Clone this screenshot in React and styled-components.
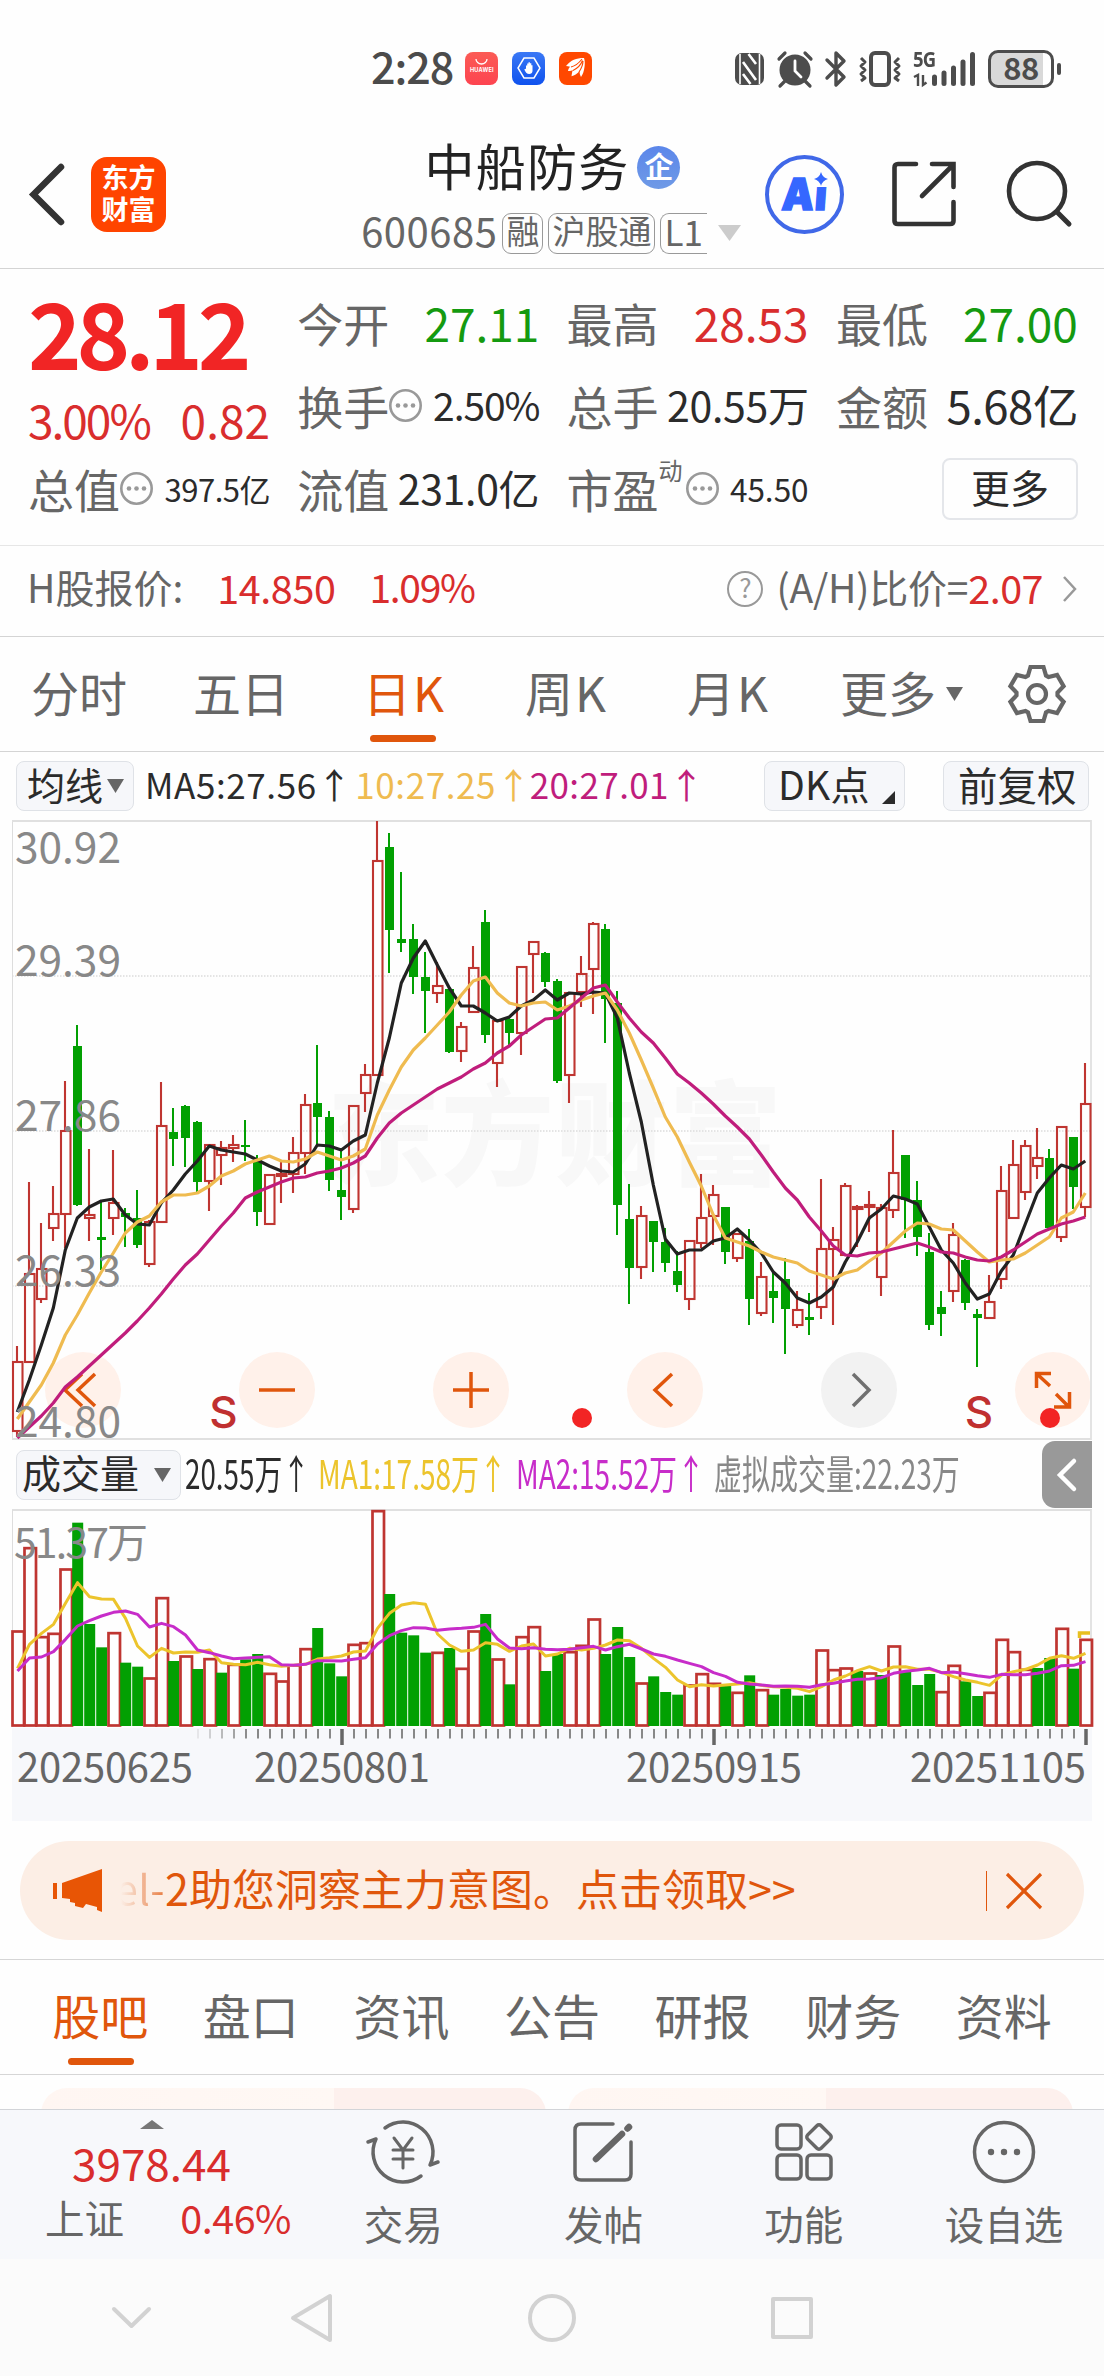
import React from "react";
import styled, { createGlobalStyle, css } from "styled-components";

const Global = createGlobalStyle`
  * { box-sizing: border-box; }
  body { margin: 0; background: #fff; }
  #root { width: 1104px; }
  svg { display: block; flex: none; overflow: visible; }
`;

const RED = "#bf3531";
const UP = "#d92d2d";
const GREEN = "#02a002";
const DOWN = "#149a10";
const ORANGE = "#e0560c";
const GREY = "#666";
const INK = "#2b2b2b";
const FONT = '"Noto Sans CJK SC", "Noto Sans", sans-serif';

const Page = styled.main`
  width: 1104px;
  height: 2376px;
  display: flex;
  flex-direction: column;
  background: #fefefe;
  font-family: ${FONT};
  overflow: hidden;
`;

const T = styled.span`
  flex: none;
  display: inline-block;
  white-space: nowrap;
  line-height: 1;
  padding-bottom: 0.13em;
  font-size: ${(p) => p.$s}px;
  font-weight: ${(p) => p.$w || 400};
  letter-spacing: ${(p) => p.$ls || 0}px;
  color: ${(p) => p.$c || GREY};
  margin-left: ${(p) => p.$ml || 0}px;
`;

/* ---------- status bar ---------- */
const StatusBar = styled.header`
  height: 120px;
  padding: 17px 43px 0 371px;
  display: flex;
  align-items: center;
  justify-content: space-between;
`;
const Cluster = styled.div`
  display: flex;
  align-items: center;
  gap: ${(p) => p.$gap}px;
`;
const AppBadge = styled.div`
  width: 33px;
  height: 33px;
  border-radius: 8px;
  background: ${(p) => p.$bg};
  display: flex;
  align-items: center;
  justify-content: center;
  position: relative;
`;
const Tiny = styled.span`
  font: 700 5.6px/1 Inter, sans-serif;
  letter-spacing: 0.2px;
  color: #fff;
  padding-top: 5px;
`;
const Smile = styled.svg`
  position: absolute;
  top: 6px;
  left: 10px;
`;
const Net = styled.div`
  width: 63px;
  height: 35px;
  display: flex;
  align-items: flex-end;
  position: relative;
`;
const NetLabel = styled.span`
  position: absolute;
  left: 0;
  top: -2px;
  font: 700 21px/1 "Open Sans", sans-serif;
  letter-spacing: -1px;
  transform: scaleX(0.88);
  transform-origin: left;
  color: #4c4c4c;
`;
const Battery = styled.div`
  width: 66px;
  height: 38px;
  border: 3px solid #4c4c4c;
  border-radius: 10px;
  display: flex;
  align-items: center;
  justify-content: center;
  background: linear-gradient(90deg, #d9d9d9 87%, #fff 87%);
`;
const Nub = styled.div`
  width: 4px;
  height: 12px;
  border-radius: 2px;
  margin-left: 3px;
  background: #4c4c4c;
`;
const Row = styled.div`
  display: flex;
  align-items: center;
  margin-left: ${(p) => p.$ml || 0}px;
`;

function Status() {
  return (
    <StatusBar>
      <Cluster $gap={14}>
        <T $s={43} $w={500} $c="#4b4b4b" $ls={-1}>2:28</T>
        <Row $ml={-2}>
          <Cluster $gap={14}>
            <AppBadge $bg="linear-gradient(#fb5b55,#fd4450)">
              <Smile width="13" height="7"><path d="M1 1a5.5 5 0 0 0 11 0" fill="none" stroke="#fff" strokeWidth="1.3" /></Smile>
              <Tiny>HUAWEI</Tiny>
            </AppBadge>
            <AppBadge $bg="linear-gradient(#3a78f5,#0f52ee)">
              <svg width="24" height="24" viewBox="0 0 24 24">
                <path d="M7 2h10l6 10-6 10H7L1 12z" fill="none" stroke="#fff" strokeWidth="1.5" />
                <path d="M9 13V9.5h1.2V7.4h1.3V6.3h1.4v1h1.4v2h1.2V15c0 2-1.5 3-3.3 3-2.2 0-3.5-1.500-4.900-4.500l1-.7z" fill="#fff" />
              </svg>
            </AppBadge>
            <AppBadge $bg="#ff4800">
              <svg width="24" height="24" viewBox="0 0 24 24">
                <path d="M2 10C7 4 12 2 20 2c1 3 1 6 .5 9-.5 4-1.500 7-3.500 10-1-2-1.500-3.500-1.300-6-3 3-5 4.500-8.200 5.300C8 17 8 16 9 14c-2 1-3.500 1.200-5 1 0-1.500 1-3 2-4.300-1.500-.4-2.600-.5-4-.7z" fill="#fff" />
                <path d="M7 11c4-1 8-4 11-8M9 14.500c4-2 8-6 9.500-10M15 16c2-3 4-7 4-11" stroke="#ff4800" strokeWidth="1.100" fill="none" />
              </svg>
            </AppBadge>
          </Cluster>
        </Row>
      </Cluster>
      <Cluster $gap={12}>
        <svg width="31" height="34" viewBox="0 0 31 34">
          <rect x="1" y="1" width="29" height="32" rx="7" fill="#4c4c4c" />
          <path d="M6 2v30M25.500 2v30" stroke="#fff" strokeWidth="1.600" />
          <path d="M9 10l13 18M9 22l7.500 10M14.500 2L22 12" stroke="#fff" strokeWidth="2.600" />
        </svg>
        <svg width="36" height="36" viewBox="0 0 36 36">
          <circle cx="18" cy="19" r="15.500" fill="#4c4c4c" />
          <path d="M2 8l6-6M34 8l-6-6M8 30l-5 5M28 30l5 5" stroke="#4c4c4c" strokeWidth="3.200" strokeLinecap="round" />
          <path d="M18 10v10l6 6" stroke="#fff" strokeWidth="2.800" fill="none" strokeLinecap="round" />
        </svg>
        <svg width="22" height="36" viewBox="0 0 22 36">
          <path d="M2 9l17 17-8 8V2l8 8L2 27" stroke="#4c4c4c" strokeWidth="3.400" fill="none" strokeLinejoin="round" strokeLinecap="round" />
        </svg>
        <svg width="42" height="36" viewBox="0 0 42 36">
          <rect x="12" y="2" width="18" height="32" rx="4" fill="none" stroke="#4c4c4c" strokeWidth="4" />
          <path d="M2 7l4 4-4 4 4 4-4 4 4 4-4 3M40 7l-4 4 4 4-4 4 4 4-4 4 4 3" stroke="#4c4c4c" strokeWidth="3" fill="none" strokeLinejoin="round" />
        </svg>
        <Net>
          <NetLabel>5G</NetLabel>
          <svg width="63" height="35" viewBox="0 0 63 35">
            <path d="M1 26l4-2v11M10 24v10l3.500-2.500" stroke="#4c4c4c" strokeWidth="2.400" fill="none" />
            {[[21.500, 25], [31, 21], [40.500, 16], [50, 10], [59.500, 2.500]].map(([x, y]) => (
              <path key={x} d={`M${x} ${y + 1}V32.500`} stroke="#4c4c4c" strokeWidth="5" strokeLinecap="round" />
            ))}
          </svg>
        </Net>
        <Row>
          <Battery><T $s={31} $w={700} $c="#4c4c4c" $ls={-0.5}>88</T></Battery>
          <Nub />
        </Row>
      </Cluster>
    </StatusBar>
  );
}

/* ---------- title bar ---------- */
const TitleBar = styled.div`
  height: 149px;
  border-bottom: 1px solid #d4d4d4;
  padding: 0 32px 0 28px;
  display: flex;
  align-items: center;
`;
const Logo = styled.div`
  width: 75px;
  height: 75px;
  margin-left: 25px;
  border-radius: 16px;
  background: #ff4400;
  display: flex;
  flex-direction: column;
  align-items: center;
  justify-content: center;
  gap: 2px;
`;
const TitleBlock = styled.div`
  width: 384px;
  margin-left: 193px;
  height: 132px;
  flex: none;
  display: flex;
  flex-direction: column;
  align-items: center;
`;
const NameRow = styled.div`
  display: flex;
  align-items: center;
  gap: 8px;
  height: 78px;
  padding-left: 3px;
`;
const CodeRow = styled.div`
  display: flex;
  align-items: center;
  height: 54px;
  gap: 5px;
`;
const Verified = styled.span`
  width: 43px;
  height: 43px;
  border-radius: 50%;
  background: linear-gradient(#5b86ea, #6f9ae6);
  display: flex;
  justify-content: center;
  align-items: center;
`;
const Tag = styled.span`
  height: 41px;
  padding: 0 3px;
  display: flex;
  align-items: center;
  border: 1.5px solid #999;
  border-radius: ${(p) => (p.$cut ? "9px 0 0 9px" : "9px")};
  ${(p) => p.$cut && css`border-right: 0; padding-right: 4px;`}
`;
const AiButton = styled.div`
  position: relative;
  width: 79px;
  height: 79px;
  margin-left: 22px;
  border: 4px solid #4068e8;
  border-radius: 50%;
  display: flex;
  align-items: center;
  justify-content: center;
`;
const AiText = styled.span`
  font: 900 44px/1 Inter, Lato, sans-serif;
  letter-spacing: 1px;
  color: #3567ff;
  transform: skewX(-4deg) scaleX(0.92);
  -webkit-text-stroke: 1.500px #3567ff;
`;
const Spark = styled.svg`
  position: absolute;
  top: 12px;
  right: 11px;
`;

function Title() {
  return (
    <TitleBar>
      <svg width="38" height="64" viewBox="0 0 38 64">
        <path d="M33 5L5.500 32.500L33 60" fill="none" stroke="#333" strokeWidth="6.500" strokeLinecap="round" />
      </svg>
      <Logo>
        <T $s={27} $w={700} $c="#fff">东方</T>
        <T $s={27} $w={700} $c="#fff">财富</T>
      </Logo>
      <TitleBlock>
        <NameRow>
          <T $s={50} $c="#222" $ls={1.2}>中船防务</T>
          <Verified><T $s={29} $w={700} $c="#fff">企</T></Verified>
        </NameRow>
        <CodeRow>
          <T $s={40} $ls={0.5}>600685</T>
          <Tag><T $s={33}>融</T></Tag>
          <Tag><T $s={33}>沪股通</T></Tag>
          <Tag $cut><T $s={35}>L1</T></Tag>
          <svg width="29" height="16" viewBox="0 0 29 16"><path d="M6 0h23L17.500 16z" fill="#ccc" /></svg>
        </CodeRow>
      </TitleBlock>
      <AiButton>
        <AiText>Ai</AiText>
        <Spark width="16" height="16" viewBox="0 0 16 16">
          <rect width="16" height="16" fill="#fefefe" />
          <path d="M8 1Q9.500 6.500 15 8Q9.500 9.500 8 15Q6.500 9.500 1 8Q6.500 6.500 8 1z" fill="#3567ff" />
        </Spark>
      </AiButton>
      <Row $ml={48}>
        <svg width="64" height="66" viewBox="0 0 64 66">
          <path d="M24 3H6Q2.500 3 2.500 6.500V60Q2.500 63 6 63H58Q61.500 63 61.500 60V41M40 3H61.500V26M61 4L30 35" fill="none" stroke="#333" strokeWidth="4.600" strokeLinecap="round" />
        </svg>
      </Row>
      <Row $ml={50}>
        <svg width="66" height="66" viewBox="0 0 66 66">
          <circle cx="31" cy="30" r="28" fill="none" stroke="#333" strokeWidth="4.600" />
          <path d="M51 51L63 63" stroke="#333" strokeWidth="5" strokeLinecap="round" />
        </svg>
      </Row>
    </TitleBar>
  );
}

/* ---------- quote ---------- */
const Quote = styled.section`
  height: 277px;
  padding: 14px 26px 0 28px;
  border-bottom: 1px solid #e6e6e6;
  display: grid;
  grid-template-columns: repeat(4, 242px);
  grid-template-rows: repeat(3, 83px);
  column-gap: 27.300px;
`;
const Cell = styled.div`
  display: flex;
  align-items: center;
  justify-content: space-between;
`;
const PriceCell = styled.div`
  grid-row: span 2;
  display: flex;
  flex-direction: column;
  padding-top: 2px;
  gap: 8px;
`;
const Sup = styled.span`
  font-size: 24px;
  line-height: 1;
  color: ${GREY};
  align-self: flex-start;
  padding-bottom: 41px;
  margin-right: 3px;
`;
const Mark = styled.span`
  padding-bottom: 5px;
`;
const Outline = styled.button`
  width: 136px;
  height: 62px;
  margin-left: auto;
  margin-bottom: 3px;
  border: 2px solid #e4e6ea;
  border-radius: 8px;
  background: transparent;
  font-family: inherit;
  display: flex;
  align-items: center;
  justify-content: center;
  padding: 0;
`;
const Dots = () => (
  <Mark>
    <svg width="33" height="33" viewBox="0 0 33 33">
      <circle cx="16.500" cy="16.500" r="15.200" fill="none" stroke="#999" strokeWidth="2.600" />
      {[9, 16.500, 24].map((x) => <circle key={x} cx={x} cy="16.500" r="2.300" fill="#999" />)}
    </svg>
  </Mark>
);

function QuotePanel() {
  return (
    <Quote>
      <PriceCell>
        <T $s={91} $w={700} $c="#f12525" $ls={-5.2}>28.12</T>
        <Cell><T $s={46} $c={UP} $ls={-2}>3.00%</T><T $s={46} $c={UP}>0.82</T></Cell>
      </PriceCell>
      <Cell><T $s={46}>今开</T><T $s={46} $c={DOWN}>27.11</T></Cell>
      <Cell><T $s={46}>最高</T><T $s={46} $c={UP}>28.53</T></Cell>
      <Cell><T $s={46}>最低</T><T $s={46} $c={DOWN}>27.00</T></Cell>
      <Cell><Row><T $s={46}>换手</T><Dots /></Row><T $s={39} $c={INK} $ls={-1.100}>2.50%</T></Cell>
      <Cell><T $s={46}>总手</T><T $s={41} $c={INK} $ls={-0.3}>20.55万</T></Cell>
      <Cell><T $s={46}>金额</T><T $s={45.500} $c={INK} $ls={-0.5}>5.68亿</T></Cell>
      <Cell><Row><T $s={46}>总值</T><Dots /></Row><T $s={31} $c={INK} $ls={-0.5}>397.5亿</T></Cell>
      <Cell><T $s={46}>流值</T><T $s={41} $c={INK} $ls={-0.3}>231.0亿</T></Cell>
      <Cell><Row><T $s={46}>市盈</T><Sup>动</Sup><Dots /></Row><T $s={31.500} $c={INK}>45.50</T></Cell>
      <Cell><Outline><T $s={39} $c={INK}>更多</T></Outline></Cell>
    </Quote>
  );
}

/* ---------- H share ---------- */
const HRow = styled.section`
  height: 91px;
  border-bottom: 1px solid #d4d4d4;
  padding: 0 27px 4px 27px;
  display: flex;
  align-items: center;
`;
const Spacer = styled.span`
  flex: 1;
`;
const Help = styled.span`
  width: 36px;
  height: 36px;
  border: 2.500px solid #999;
  border-radius: 50%;
  display: flex;
  align-items: center;
  justify-content: center;
  margin-right: 13px;
`;

/* ---------- tabs ---------- */
const Tabs = styled.nav`
  height: 115px;
  border-bottom: 1px solid #d4d4d4;
  padding: 0 37px 0 31px;
  display: flex;
  align-items: center;
`;
const Tab = styled.div`
  position: relative;
  height: 100%;
  display: flex;
  align-items: center;
  width: ${(p) => p.$w}px;
`;
const Underline = styled.i`
  position: absolute;
  bottom: 9px;
  left: ${(p) => p.$l}px;
  width: 66px;
  height: 7px;
  border-radius: 4px;
  background: ${ORANGE};
`;
const gear = Array.from({ length: 6 }, (_, k) => {
  const a = (k * Math.PI) / 3;
  return [[-9, -18.500], [-6.500, -27], [6.500, -27], [9, -18.500]]
    .map(([x, y]) => `${(x * Math.cos(a) - y * Math.sin(a)).toFixed(1)},${(x * Math.sin(a) + y * Math.cos(a)).toFixed(1)}`)
    .join(" ");
}).join(" ");

const Caret = ({ w, h, c = GREY }) => (
  <svg width={w} height={h} viewBox={`0 0 ${w} ${h}`}><path d={`M0 0H${w}L${w / 2} ${h}z`} fill={c} /></svg>
);

function PeriodTabs() {
  return (
    <Tabs>
      <Tab $w={162}><T $s={48}>分时</T></Tab>
      <Tab $w={170}><T $s={48}>五日</T></Tab>
      <Tab $w={162}><T $s={48} $c={ORANGE} $ls={2}>日K</T><Underline $l={7} /></Tab>
      <Tab $w={162}><T $s={48} $ls={2}>周K</T></Tab>
      <Tab $w={153}><T $s={48} $ls={2}>月K</T></Tab>
      <Tab $w={168}><T $s={48}>更多</T><Row $ml={10}><Caret w={17} h={14} /></Row></Tab>
      <svg width="58" height="58" viewBox="-29 -29 58 58">
        <polygon points={gear} fill="none" stroke={GREY} strokeWidth="4.200" />
        <circle r="9" fill="none" stroke={GREY} strokeWidth="4.200" />
      </svg>
    </Tabs>
  );
}

/* ---------- indicator rows ---------- */
const IndicatorRow = styled.div`
  height: ${(p) => p.$h}px;
  padding: 0 0 0 16px;
  display: flex;
  align-items: center;
`;
const Chip = styled.div`
  width: ${(p) => p.$w}px;
  height: 50px;
  padding: 0 9px 0 ${(p) => p.$pl}px;
  border: 1.500px solid #dfe2e7;
  border-radius: 8px;
  background: #f6f7fa;
  display: flex;
  align-items: center;
  justify-content: space-between;
  flex: none;
  margin-left: ${(p) => p.$ml || 0}px;
`;
const Corner = styled.svg`
  align-self: flex-end;
  margin-bottom: 6px;
`;
const Squeezed = styled.div`
  width: ${(p) => p.$w}px;
  margin-left: ${(p) => p.$ml || 0}px;
  flex: none;
  display: flex;
  & > span {
    transform: scaleX(${(p) => p.$k});
    transform-origin: left center;
  }
`;
const Collapse = styled.div`
  width: 50px;
  height: 67px;
  margin-left: auto;
  margin-right: 12px;
  border-radius: 13px 0 0 13px;
  background: #999;
  display: flex;
  align-items: center;
  justify-content: center;
`;

/* ---------- price chart ---------- */
// [rising, high, bodyTop, bodyBottom, low]
const candles = [
  [1, 1346, 1362, 1431, 1437], [1, 1182, 1274, 1362, 1362], [1, 1223, 1269, 1299, 1303], [1, 1186, 1214, 1228, 1241], [1, 1081, 1131, 1214, 1248],
  [0, 1025, 1046, 1205, 1206], [1, 1149, 1215, 1218, 1241], [0, 1202, 1237, 1240, 1270], [1, 1150, 1203, 1218, 1235], [0, 1208, 1213, 1217, 1247],
  [0, 1190, 1218, 1245, 1248], [1, 1220, 1222, 1264, 1267], [1, 1082, 1126, 1222, 1222], [0, 1108, 1132, 1139, 1166], [0, 1105, 1106, 1138, 1167],
  [0, 1121, 1122, 1182, 1192], [1, 1144, 1145, 1181, 1211], [1, 1141, 1148, 1155, 1185], [1, 1135, 1145, 1148, 1162], [0, 1120, 1145, 1147, 1161],
  [0, 1155, 1160, 1212, 1226], [1, 1174, 1175, 1224, 1224], [1, 1161, 1174, 1176, 1203], [1, 1137, 1153, 1174, 1193], [1, 1094, 1105, 1153, 1174],
  [0, 1045, 1103, 1117, 1145], [0, 1111, 1117, 1180, 1191], [0, 1148, 1190, 1197, 1220], [1, 1105, 1106, 1209, 1213], [1, 1064, 1075, 1093, 1112],
  [1, 821, 861, 1075, 1075], [0, 833, 847, 930, 973], [0, 872, 939, 943, 952], [0, 924, 939, 977, 994], [0, 952, 977, 991, 1033],
  [1, 962, 986, 993, 1003], [0, 989, 989, 1052, 1053], [1, 1022, 1027, 1051, 1062], [1, 946, 968, 1012, 1012], [0, 910, 922, 1035, 1043],
  [1, 1020, 1021, 1063, 1087], [0, 1017, 1019, 1033, 1047], [1, 966, 967, 1033, 1055], [1, 941, 942, 954, 993], [0, 952, 953, 982, 987],
  [0, 979, 981, 1081, 1083], [1, 992, 993, 1075, 1103], [1, 956, 974, 992, 1007], [1, 922, 924, 969, 1014], [0, 924, 929, 999, 1043],
  [0, 991, 1003, 1205, 1235], [0, 1184, 1219, 1268, 1304], [1, 1206, 1216, 1267, 1279], [0, 1221, 1221, 1242, 1272], [0, 1228, 1242, 1263, 1272],
  [0, 1251, 1271, 1285, 1292], [1, 1241, 1241, 1299, 1310], [1, 1174, 1218, 1243, 1248], [1, 1185, 1195, 1216, 1245], [0, 1207, 1207, 1252, 1264],
  [1, 1233, 1234, 1258, 1262], [0, 1229, 1241, 1299, 1325], [1, 1262, 1277, 1313, 1316], [0, 1273, 1291, 1298, 1323], [0, 1258, 1279, 1309, 1354],
  [1, 1291, 1310, 1325, 1328], [0, 1293, 1317, 1320, 1335], [1, 1179, 1249, 1307, 1319], [1, 1227, 1240, 1249, 1325], [1, 1183, 1186, 1255, 1255],
  [1, 1205, 1207, 1209, 1247], [1, 1191, 1205, 1207, 1232], [1, 1204, 1208, 1277, 1296], [1, 1130, 1173, 1210, 1218], [0, 1155, 1155, 1200, 1238],
  [0, 1181, 1200, 1237, 1256], [0, 1233, 1252, 1325, 1330], [0, 1291, 1307, 1314, 1336], [1, 1223, 1235, 1291, 1302], [0, 1259, 1260, 1303, 1310],
  [0, 1309, 1314, 1318, 1367], [1, 1275, 1302, 1318, 1318], [1, 1166, 1191, 1279, 1289], [1, 1140, 1165, 1218, 1218], [1, 1140, 1146, 1192, 1200],
  [1, 1128, 1158, 1166, 1179], [0, 1149, 1158, 1228, 1229], [1, 1126, 1127, 1237, 1242], [0, 1137, 1137, 1187, 1209], [1, 1063, 1104, 1207, 1217],
];
const ma5 = [1412, 1380, 1345, 1308, 1250, 1218, 1207, 1201, 1199, 1215, 1224, 1225, 1203, 1190, 1174, 1161, 1146, 1150, 1152, 1154, 1160, 1166, 1171, 1172, 1164, 1145, 1146, 1150, 1141, 1135, 1083, 1038, 983, 958, 941, 965, 988, 1006, 1006, 1013, 1021, 1017, 1006, 1000, 990, 1000, 993, 994, 992, 993, 1018, 1073, 1122, 1185, 1239, 1254, 1250, 1250, 1241, 1238, 1229, 1240, 1253, 1272, 1283, 1298, 1303, 1297, 1287, 1262, 1242, 1218, 1209, 1196, 1199, 1204, 1227, 1250, 1263, 1283, 1299, 1294, 1271, 1255, 1224, 1193, 1178, 1165, 1169, 1161];
const ma10 = [1419, 1402, 1385, 1363, 1335, 1315, 1293, 1272, 1253, 1233, 1222, 1216, 1202, 1195, 1195, 1193, 1186, 1176, 1171, 1164, 1160, 1156, 1161, 1162, 1159, 1152, 1156, 1160, 1156, 1149, 1115, 1090, 1067, 1050, 1038, 1025, 1012, 995, 981, 977, 993, 1003, 1006, 1003, 1002, 1010, 1006, 1000, 996, 993, 1010, 1033, 1060, 1088, 1117, 1137, 1162, 1186, 1215, 1238, 1242, 1246, 1252, 1257, 1260, 1263, 1271, 1275, 1279, 1273, 1270, 1261, 1253, 1242, 1231, 1223, 1224, 1229, 1230, 1241, 1252, 1262, 1260, 1259, 1253, 1245, 1237, 1218, 1212, 1193];
const ma20 = [1438, 1427, 1416, 1403, 1387, 1377, 1366, 1355, 1344, 1333, 1321, 1308, 1294, 1279, 1265, 1254, 1240, 1226, 1213, 1198, 1192, 1187, 1182, 1178, 1177, 1173, 1171, 1168, 1163, 1156, 1138, 1123, 1113, 1105, 1097, 1089, 1083, 1077, 1069, 1063, 1053, 1046, 1035, 1027, 1019, 1018, 1008, 998, 988, 985, 1002, 1018, 1032, 1043, 1058, 1074, 1083, 1093, 1104, 1116, 1127, 1139, 1155, 1172, 1188, 1200, 1217, 1231, 1246, 1255, 1256, 1253, 1252, 1249, 1246, 1243, 1247, 1252, 1253, 1257, 1260, 1261, 1257, 1250, 1242, 1234, 1229, 1224, 1221, 1217];

const cx = (i) => 17 + i * 12;
const line = (ys) => ys.map((y, i) => `${cx(i) + 0.3},${y}`).join(" ");

const ChartBox = styled.div`
  position: relative;
  height: 620px;
  flex: none;
`;
const Layer = styled.svg`
  position: absolute;
  inset: 0;
`;
const Watermark = styled.span`
  position: absolute;
  left: 327px;
  top: 240px;
  font-size: 113px;
  font-weight: 900;
  line-height: 1.2;
  letter-spacing: 1px;
  color: #f8f8f8;
`;
const Controls = styled.div`
  position: absolute;
  left: 45px;
  right: 13px;
  bottom: 12px;
  display: flex;
  justify-content: space-between;
`;
const Round = styled.div`
  width: 76px;
  height: 76px;
  border-radius: 50%;
  background: ${(p) => (p.$off ? "#f2f2f2" : "#fff1ea")};
  svg { width: 76px; height: 76px; }
  path { fill: none; stroke: ${(p) => (p.$off ? "#707070" : ORANGE)}; stroke-width: 3.5; }
`;
const AxisText = styled.text`
  font-family: ${FONT};
  font-size: ${(p) => p.$s}px;
  fill: ${(p) => p.$c};
`;
const SellMark = styled.text`
  font-family: Inter, Roboto, sans-serif;
  font-size: 44px;
  font-weight: 500;
  fill: #c03030;
`;
const controls = [
  "M37 22L20 38L37 54M50 22L33 38L50 54",
  "M20 38H56",
  "M20 38H56M38 20V56",
  "M45 22L28 38L45 54",
  "M32 22L48 38L32 54",
  "M36 21.500H21.500V36M21.500 21.500L35 34M41 42L54 55M39 55H54.500V40",
];

function PriceChart() {
  return (
    <ChartBox>
      <Watermark>东方财富</Watermark>
      <Controls>
        {controls.map((d, i) => (
          <Round key={i} $off={i === 4}><svg viewBox="0 0 76 76"><path d={d} /></svg></Round>
        ))}
      </Controls>
      <Layer width="1104" height="620" viewBox="0 820 1104 620">
        {[976, 1131, 1286].map((y) => <path key={y} d={`M12 ${y}H1091`} stroke="#dcdcdc" strokeWidth="1.500" strokeDasharray="1.500 1.500" />)}
        <path d="M12.500 821V1439.500" stroke="#ddd" />
        <path d="M12 821H1091V1439H12" fill="none" stroke="#e0e0e0" strokeWidth="1.800" />
        {candles.map(([up, hi, top, bot, lo], i) => {
          const x = cx(i);
          if (!up) {
            return (
              <g key={i} fill={GREEN}>
                <rect x={x - 1} y={hi} width="2" height={lo - hi} />
                <rect x={x - 4} y={top} width="9" height={bot - top} />
              </g>
            );
          }
          return (
            <g key={i} stroke={RED} strokeWidth="2.100" fill="none">
              <path d={`M${x} ${hi}V${top}M${x} ${bot}V${lo}`} />
              <rect x={x - 4} y={top} width="9.500" height={bot - top} />
            </g>
          );
        })}
        <g fill="none" strokeWidth="3.200" strokeLinejoin="round">
          <polyline points={line(ma5)} stroke="#222" />
          <polyline points={line(ma10)} stroke="#efbb50" />
          <polyline points={line(ma20)} stroke="#c01d7c" />
        </g>
        {[["30.92", 863], ["29.39", 976], ["27.86", 1131], ["26.33", 1286], ["24.80", 1437]].map(([t, y]) => (
          <AxisText key={t} x="15" y={y} $s={42.500} $c="#888" textLength="106">{t}</AxisText>
        ))}
        {[223.500, 979].map((x) => <SellMark key={x} x={x} y="1427.500" textAnchor="middle">S</SellMark>)}
        {[582, 1050].map((x) => <circle key={x} cx={x} cy="1418" r="10" fill="#f22424" />)}
      </Layer>
    </ChartBox>
  );
}

/* ---------- volume ---------- */
// positive: hollow rising bar, negative: filled falling bar; units are thirds of a pixel from the panel's top
const tops = [603, 353, 620, 610, 417, -278, -582, -652, 608, -698, -710, 744, 503, -693, 678, -717, 686, -728, 703, -688, -672, 730, 753, 705, 656, -594, -700, -739, 643, 638, 242, -492, -608, -616, -668, 667, -654, 715, 603, -552, 687, -763, 620, 590, -723, -672, 665, 646, 567, -672, -591, -681, 759, -739, -786, -794, 765, 731, 760, -768, 787, -736, 779, -794, -777, -797, -794, 660, 719, 714, -723, 729, -735, 648, -723, -765, -732, 785, 706, -754, -798, 787, 628, 665, 718, -714, -684, 595, -716, 628];
const vma5 = [715, 643, 610, 583, 520, 458, 500, 507, 508, 565, 648, 682, 655, 669, 666, 667, 660, 698, 703, 704, 697, 704, 709, 706, 703, 687, 683, 678, 666, 663, 595, 550, 525, 518, 523, 612, 645, 664, 660, 638, 643, 664, 648, 642, 678, 672, 655, 660, 655, 645, 630, 632, 655, 685, 712, 750, 770, 764, 768, 765, 762, 758, 766, 770, 772, 775, 785, 770, 750, 738, 722, 710, 723, 711, 710, 718, 718, 727, 740, 750, 757, 766, 735, 725, 718, 705, 685, 677, 685, 670];
const vma10 = [723, 684, 681, 665, 628, 588, 572, 558, 547, 543, 553, 591, 580, 590, 615, 660, 668, 678, 686, 684, 682, 680, 704, 706, 703, 692, 692, 693, 688, 683, 642, 617, 602, 593, 594, 601, 597, 595, 592, 583, 627, 654, 656, 653, 658, 659, 658, 653, 649, 660, 650, 643, 657, 672, 679, 690, 700, 710, 728, 739, 757, 762, 765, 769, 768, 769, 772, 764, 760, 753, 748, 747, 743, 730, 724, 720, 715, 728, 726, 731, 737, 742, 733, 734, 734, 730, 723, 707, 706, 695];
const vy = (v) => 1430 + v / 3;

const VolumeBox = styled.div`
  height: 312px;
  flex: none;
`;

function VolumeChart() {
  return (
    <VolumeBox>
      <svg width="1104" height="312" viewBox="0 1509 1104 312">
        <path d="M12 1510H1091V1727" fill="none" stroke="#e0e0e0" strokeWidth="1.800" />
        <path d="M12.500 1510V1727" stroke="#ddd" />
        <rect x="12" y="1728" width="1080" height="93" fill="#f7f8fb" />
        {tops.map((v, i) => {
          const x = cx(i);
          const y = vy(Math.abs(v));
          return v < 0
            ? <rect key={i} x={x - 4.800} y={y} width="11" height={1726 - y} fill={GREEN} />
            : <rect key={i} x={x - 4.500} y={y + 0.500} width="11.500" height={1725 - y} fill="none" stroke={RED} strokeWidth="2.700" />;
        })}
        <path d="M1079.500 1638V1633H1090" fill="none" stroke="#e8c020" strokeWidth="3.500" />
        <g fill="none" strokeWidth="3" strokeLinejoin="round">
          <polyline points={vma5.map((v, i) => `${cx(i) + 0.500},${vy(v)}`).join(" ")} stroke="#ecc42c" />
          <polyline points={vma10.map((v, i) => `${cx(i) + 0.500},${vy(v)}`).join(" ")} stroke="#c72cc9" />
        </g>
        <AxisText x="14" y="1558" $s={41} $c="#888" textLength="134">51.37万</AxisText>
        {Array.from({ length: 75 }, (_, k) => {
          const x = 198 + k * 12;
          const major = x === 342 || x === 714 || x === 1086;
          return <path key={k} d={`M${x} 1729V${major ? 1745 : 1738.500}`} stroke={major ? "#666" : "#888"} strokeWidth={major ? 3.500 : 2} opacity={Math.min(1, 0.150 + k * 0.200)} />;
        })}
        {[["20250625", 17], ["20250801", 254], ["20250915", 626], ["20251105", 910]].map(([t, x]) => (
          <AxisText key={t} x={x} y="1782" $s={40} $c={GREY} textLength="176">{t}</AxisText>
        ))}
      </svg>
    </VolumeBox>
  );
}

/* ---------- promo ---------- */
const Promo = styled.section`
  height: 99px;
  margin: 20px 20px 19px;
  padding: 0 42px 0 33px;
  border-radius: 50px;
  background: #fceee5;
  display: flex;
  align-items: center;
  flex: none;
`;
const Marquee = styled.div`
  flex: none;
  width: 850px;
  margin-left: 12px;
  padding-bottom: 1px;
  display: flex;
  align-items: center;
`;
const Faded = styled.span`
  font-size: 41px;
  line-height: 1.5;
  padding-bottom: 5px;
  letter-spacing: 0.5px;
  color: transparent;
  background: linear-gradient(90deg, rgba(224, 86, 12, 0) 12%, rgba(224, 86, 12, 0.75));
  -webkit-background-clip: text;
  background-clip: text;
`;
const Rule = styled.i`
  width: 1.500px;
  height: 40px;
  margin-left: auto;
  margin-right: 19px;
  background: ${ORANGE};
`;

/* ---------- news tabs ---------- */
const NewsTabs = styled.nav`
  height: 116px;
  border: 1px solid #d6d6d6;
  border-width: 1px 0;
  padding: 0 25px;
  display: grid;
  grid-template-columns: repeat(7, 1fr);
  flex: none;
`;
const NewsTab = styled.div`
  position: relative;
  display: flex;
  align-items: center;
  justify-content: center;
`;
const Cards = styled.div`
  height: 34px;
  padding: 13px 31px 0 41px;
  display: flex;
  justify-content: space-between;
  overflow: hidden;
  flex: none;
`;
const Card = styled.div`
  width: 505px;
  height: 60px;
  border-radius: 26px;
  background: linear-gradient(90deg, #fff6f2 0, #fff8f4 ${(p) => p.$k}%, #fdf0ed ${(p) => p.$k}%, #fdf0ed 100%);
`;

/* ---------- bottom bar ---------- */
const BottomBar = styled.nav`
  height: 150px;
  border-top: 1px solid #d2d4d8;
  background: #f7f8fb;
  display: flex;
  flex: none;
`;
const Index = styled.div`
  width: 303px;
  padding-top: 10px;
  display: flex;
  flex-direction: column;
  align-items: center;
`;
const IndexRow = styled.div`
  align-self: stretch;
  padding: 7px 12px 0 45px;
  display: flex;
  align-items: center;
  justify-content: space-between;
`;
const Action = styled.div`
  width: 200.250px;
  padding-top: 9px;
  display: flex;
  flex-direction: column;
  align-items: center;
  gap: 18px;
`;
const SysNav = styled.div`
  flex: 1;
  background: #fbfbfb;
  display: flex;
  align-items: center;
  padding-left: 111px;
  svg { fill: none; stroke: #d2d2d2; stroke-width: 4; stroke-linejoin: round; stroke-linecap: round; }
`;
const Gap = styled.span`
  width: ${(p) => p.$w || 0}px;
  height: ${(p) => p.$h || 0}px;
  flex: none;
`;
const Ico = ({ children }) => (
  <svg width="74" height="66" viewBox="-37 -33 74 66" fill="none" stroke={GREY} strokeWidth="3.500" strokeLinecap="round" strokeLinejoin="round">{children}</svg>
);

export default function App() {
  return (
    <>
      <Global />
      <Page>
        <Status />
        <Title />
        <QuotePanel />
        <HRow>
          <T $s={39}>H股报价:</T>
          <T $s={39.500} $c={UP} $ml={34} $ls={-0.4}>14.850</T>
          <T $s={39} $c={UP} $ml={34} $ls={-1.3}>1.09%</T>
          <Spacer />
          <Help><T $s={26} $c="#999">?</T></Help>
          <T $s={39} $ls={-0.2}>(A/H)比价=</T>
          <T $s={39.500} $c={UP} $ls={-0.5}>2.07</T>
          <Row $ml={19}>
            <svg width="15" height="26" viewBox="0 0 15 26"><path d="M2 1L13 13L2 25" fill="none" stroke="#999" strokeWidth="2.500" /></svg>
          </Row>
        </HRow>
        <PeriodTabs />
        <IndicatorRow $h={68}>
          <Chip $w={118} $pl={10}><T $s={38} $c={INK}>均线</T><Caret w={17} h={14} /></Chip>
          <T $s={35} $c={INK} $ml={11} $ls={0.600}>MA5:27.56↑</T>
          <T $s={35} $c="#efbb50" $ml={3} $ls={0.600}>10:27.25↑</T>
          <T $s={35} $c="#c01d7c" $ml={-2} $ls={0.400}>20:27.01↑</T>
          <Spacer />
          <Chip $w={141} $pl={13}><T $s={39} $c={INK} $ls={0.200}>DK点</T><Corner width="13" height="13"><path d="M13 0V13H0z" fill={INK} /></Corner></Chip>
          <Chip $w={146} $pl={14} $ml={38}><T $s={39.500} $c={INK}>前复权</T></Chip>
          <Gap $w={15} />
        </IndicatorRow>
        <PriceChart />
        <IndicatorRow $h={69}>
          <Chip $w={165} $pl={5}><T $s={39} $c={INK}>成交量</T><Caret w={17} h={14} /></Chip>
          <Squeezed $w={133} $ml={4} $k={0.695}><T $s={40} $c={INK}>20.55万↑</T></Squeezed>
          <Squeezed $w={198} $k={0.700}><T $s={40} $c="#ecc42c">MA1:17.58万↑</T></Squeezed>
          <Squeezed $w={198} $k={0.700}><T $s={40} $c="#c72cc9">MA2:15.52万↑</T></Squeezed>
          <Squeezed $w={244} $k={0.700}><T $s={40} $c="#888">虚拟成交量:22.23万</T></Squeezed>
          <Collapse>
            <svg width="20" height="34" viewBox="0 0 20 34"><path d="M17 3L3 17L17 31" fill="none" stroke="#fff" strokeWidth="4.500" strokeLinecap="round" /></svg>
          </Collapse>
        </IndicatorRow>
        <VolumeChart />
        <Promo>
          <svg width="50" height="43" viewBox="0 0 50 43">
            <path d="M0 14H4V30H0zM9 14L49 0V43L44 41V38L33 35L30 39L22 37V34L17 33V30L9 29z" fill="#e85505" />
          </svg>
          <Marquee>
            <Faded>el-</Faded>
            <T $s={43} $c={ORANGE}>2助您洞察主力意图。点击领取&gt;&gt;</T>
          </Marquee>
          <Rule />
          <svg width="36" height="36" viewBox="0 0 36 36"><path d="M1 1L35 35M35 1L1 35" stroke={ORANGE} strokeWidth="3.200" /></svg>
        </Promo>
        <NewsTabs>
          {["股吧", "盘口", "资讯", "公告", "研报", "财务", "资料"].map((t, i) => (
            <NewsTab key={t}><T $s={48} $c={i ? GREY : ORANGE}>{t}</T>{i === 0 && <Underline $l={43} />}</NewsTab>
          ))}
        </NewsTabs>
        <Cards><Card $k={58} /><Card $k={51} /></Cards>
        <BottomBar>
          <Index>
            <svg width="24" height="9"><path d="M12 0L24 9H0z" fill="#777" /></svg>
            <Gap $h={11} />
            <T $s={44} $c={UP}>3978.44</T>
            <IndexRow><T $s={39.500}>上证</T><T $s={39.500} $c={UP} $ls={-0.5}>0.46%</T></IndexRow>
          </Index>
          <Action>
            <Ico>
              <path d="M-18 -24A30 30 0 0 1 27 13L35 10M-35 -10L-27 -13A30 30 0 0 0 18 24" />
              <path d="M-9 -14L0 -2L9 -14M0 -2V16M-10 -2H10M-10 7H10" strokeWidth="3" />
            </Ico>
            <T $s={39.500}>交易</T>
          </Action>
          <Action>
            <Ico>
              <path d="M10 -28H-22Q-28 -28 -28 -22V22Q-28 28 -22 28H22Q28 28 28 22V-10" />
              <path d="M-7 7L19 -18" strokeWidth="6.500" /><path d="M24.500 -23.500L26 -25" strokeWidth="6.500" />
            </Ico>
            <T $s={39.500}>发帖</T>
          </Action>
          <Action>
            <Ico>
              <rect x="-27" y="-27" width="24" height="24" rx="4" />
              <rect x="-27" y="3" width="24" height="24" rx="4" />
              <rect x="3" y="3" width="24" height="24" rx="4" />
              <rect x="5.500" y="-24.500" width="19" height="19" rx="3" transform="rotate(45 15 -15)" />
            </Ico>
            <T $s={39.500}>功能</T>
          </Action>
          <Action>
            <Ico>
              <circle r="29.500" />
              {[-13, 0, 13].map((x) => <circle key={x} cx={x} r="3.200" fill={GREY} stroke="none" />)}
            </Ico>
            <T $s={39.500}>设自选</T>
          </Action>
        </BottomBar>
        <SysNav>
          <svg width="41" height="22" viewBox="0 0 41 22"><path d="M3 2L20.500 19L38 2" /></svg>
          <Gap $w={138} />
          <svg width="44" height="50" viewBox="0 0 44 50"><path d="M40 3V47L3 25z" /></svg>
          <Gap $w={193} />
          <svg width="50" height="50" viewBox="0 0 50 50"><circle cx="25" cy="25" r="22" /></svg>
          <Gap $w={193} />
          <svg width="44" height="44" viewBox="0 0 44 44"><rect x="3" y="3" width="38" height="38" /></svg>
        </SysNav>
      </Page>
    </>
  );
}
